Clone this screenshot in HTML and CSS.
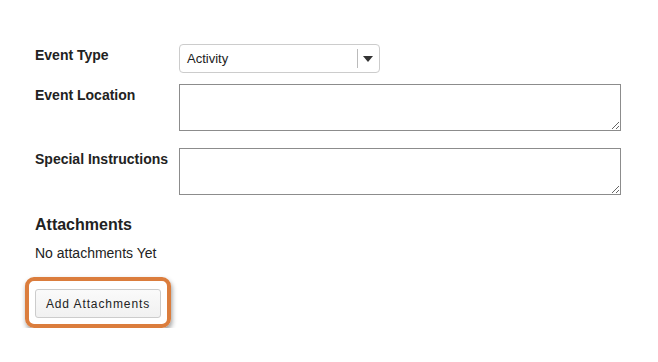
FILE: index.html
```html
<!DOCTYPE html>
<html lang="en">
<head>
    <meta charset="UTF-8">
    <meta name="viewport" content="width=device-width, initial-scale=1.0">
    <title>Event Details</title>
    <link rel="stylesheet" href="styles.css">
</head>
<body>
    <form class="event-form">
        <div class="row row-select">
            <label class="label">Event Type</label>
            <div class="select">
                <span class="select-value">Activity</span>
                <span class="select-divider"></span>
                <svg class="select-arrow" width="10" height="6" viewBox="0 0 10 6"><path d="M0 0h10L5 6z" fill="#333"/></svg>
            </div>
        </div>
        <div class="row row-location">
            <label class="label" for="location">Event Location</label>
            <textarea id="location" class="textarea"></textarea>
        </div>
        <div class="row">
            <label class="label" for="instructions">Special Instructions</label>
            <textarea id="instructions" class="textarea"></textarea>
        </div>

        <h3 class="section-title">Attachments</h3>
        <p class="empty-note">No attachments Yet</p>
        <div class="highlight">
            <button type="button" class="btn">Add Attachments</button>
        </div>
    </form>
</body>
</html>
```

FILE: styles.css
```css
body {
    margin: 0;
    background: #fff;
    font-family: "Liberation Sans", Arial, sans-serif;
    color: #333;
}
.event-form {
    padding: 44px 0 0 35px;
}
.row {
    display: flex;
    align-items: flex-start;
}
.row-select {
    margin-bottom: 11px;
}
.row-location {
    margin-bottom: 17px;
}
.label {
    width: 144px;
    flex-shrink: 0;
    padding-top: 3px;
    font-size: 14px;
    line-height: 17px;
    font-weight: bold;
    color: #222;
}
.select {
    box-sizing: border-box;
    display: flex;
    align-items: center;
    width: 201px;
    height: 29px;
    border: 1px solid #ccc;
    border-radius: 4px;
    background: #fff;
    padding-left: 7px;
    font-size: 13px;
    color: #222;
}
.select-value {
    flex: 1;
}
.select-divider {
    width: 1px;
    height: 19px;
    background: #bbb;
}
.select-arrow {
    margin: 0 6px 0 5px;
}
.textarea {
    display: block;
    box-sizing: border-box;
    width: 442px;
    height: 47px;
    margin: 0;
    border: 1px solid #8c8c8c;
    border-radius: 0;
    font-family: inherit;
}
.section-title {
    margin: 20px 0 0;
    font-size: 16px;
    line-height: 20px;
    font-weight: bold;
    color: #222;
}
.empty-note {
    margin: 10px 0 0;
    font-size: 14px;
    line-height: 17px;
    color: #222;
}
.highlight {
    display: inline-block;
    margin: 15px 0 0 -10px;
    padding: 8px 6px 6px;
    border: 4px solid #db7d3d;
    border-radius: 9px;
    box-shadow: 1px 3px 5px rgba(0,0,0,0.4);
}
.btn {
    display: block;
    width: 126px;
    height: 29px;
    padding: 0;
    border: 1px solid #ccc;
    border-radius: 3px;
    background: linear-gradient(#fafafa, #f1f1f1);
    font-family: inherit;
    font-size: 12px;
    letter-spacing: 0.9px;
    color: #222;
    cursor: pointer;
}
```
